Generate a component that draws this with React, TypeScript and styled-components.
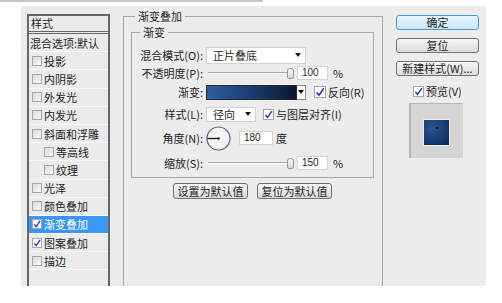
import React from 'react';
import styled, { createGlobalStyle } from 'styled-components';

const Global = createGlobalStyle`
  html, body { margin: 0; padding: 0; background: #fff; }
  body {
    font-family: "Noto Sans CJK SC", "Noto Sans", sans-serif;
    font-size: 11px;
    color: #1e1e1e;
  }
  * { box-sizing: border-box; }
`;

const TopStrip = styled.div`
  width: 263px;
  height: 2px;
  background: #c6c6c6;
`;

const Dialog = styled.div`
  margin: 4px 0 0 21px;
  width: 465px;
  height: 280px;
  background: #ececec;
  display: flex;
  align-items: flex-start;
  overflow: hidden;
`;

/* ---------- left style list ---------- */
const StyleList = styled.div`
  margin: 8px 0 0 6px;
  width: 83px;
  height: 272px;
  border: 2px solid #666;
  border-bottom: none;
  background: #ebebeb;
  display: flex;
  flex-direction: column;
  flex: none;
`;

const ListHeader = styled.div`
  height: 18px;
  border-bottom: 3px double #666;
  padding-left: 2px;
  line-height: 15px;
`;

const ListRow = styled.div<{ $sub?: boolean; $selected?: boolean; $plain?: boolean }>`
  height: 18.2px;
  flex: none;
  display: flex;
  align-items: center;
  gap: 2px;
  padding-left: ${p => (p.$plain ? 1 : p.$sub ? 15 : 3)}px;
  border-bottom: 1px solid #f9f9f9;
  background: ${p => (p.$selected ? '#3896f4' : 'transparent')};
  color: ${p => (p.$selected ? '#fff' : '#1e1e1e')};
  white-space: nowrap;
`;

const Box = styled.span<{ $size: number; $light?: boolean }>`
  display: inline-flex;
  align-items: center;
  justify-content: center;
  flex: none;
  width: ${p => p.$size}px;
  height: ${p => p.$size}px;
  border: 1px solid #a6a6a6;
  background: ${p => (p.$light ? '#fff' : 'linear-gradient(135deg, #dadada, #f8f8f8)')};
`;

function Check({ checked, size = 10, light }: { checked?: boolean; size?: number; light?: boolean }) {
  return (
    <Box $size={size} $light={light || checked}>
      {checked && (
        <svg width={size - 2} height={size - 2} viewBox="0 0 10 10">
          <path d="M1.5 5.5 L4 8.2 L8.8 1.2" stroke="#2b3e9c" strokeWidth="1.7" fill="none" />
        </svg>
      )}
    </Box>
  );
}

/* ---------- main group ---------- */
const Group = styled.fieldset`
  margin: 3px 0 0 13px;
  padding: 0 8px 0 7px;
  width: 260px;
  height: 290px;
  border: 1px solid #a9a9a9;
  border-bottom: none;
  flex: none;
  min-width: 0;
`;

const Legend = styled.legend<{ $inset: number }>`
  margin-left: ${p => p.$inset}px;
  padding: 0 3px;
  line-height: 14px;
  font-size: 11px;
`;

const InnerGroup = styled.fieldset`
  margin: 2px 0 0 0;
  padding: 7px 0 1px 0;
  width: 243px;
  border: 1px solid #a9a9a9;
  min-width: 0;
  display: flex;
  flex-direction: column;
`;

const FormRow = styled.div<{ $h: number }>`
  height: ${p => p.$h}px;
  display: flex;
  align-items: center;
`;

const Label = styled.span`
  width: 71px;
  margin-right: 3px;
  text-align: right;
  flex: none;
  white-space: nowrap;
`;

const Select = styled.div<{ $w: number; $h: number }>`
  width: ${p => p.$w}px;
  height: ${p => p.$h}px;
  background: #fff;
  border: 1px solid #d2d2d2;
  display: flex;
  align-items: center;
  justify-content: space-between;
  padding: 0 4px 0 6px;
  flex: none;
`;

const Arrow = styled.span`
  width: 0;
  height: 0;
  border-left: 3.5px solid transparent;
  border-right: 3.5px solid transparent;
  border-top: 4px solid #111;
`;

const SliderTrack = styled.div`
  width: 88px;
  height: 12px;
  margin: 0 3px 0 0;
  display: flex;
  align-items: center;
  justify-content: flex-end;
  flex: none;
  background: linear-gradient(#0000 5px, #a4a4a4 5px, #a4a4a4 6px, #fff 6px, #fff 7px, #0000 7px);
  background-size: 82px 12px;
  background-repeat: no-repeat;
  background-position: 2px 0;
`;

const Thumb = styled.span`
  width: 7px;
  height: 11px;
  border: 1px solid #9a9a9a;
  border-radius: 3px 3px 2px 2px;
  background: linear-gradient(#fafafa, #d6d6d6);
`;

const Input = styled.div<{ $w: number }>`
  width: ${p => p.$w}px;
  height: 14px;
  background: #fff;
  border: 1px solid #d4d4d4;
  padding-left: 4px;
  line-height: 12px;
  font-family: "Liberation Sans", "Noto Sans", sans-serif;
  font-size: 10px;
  flex: none;
`;

const Unit = styled.span<{ $gap: number }>`
  margin-left: ${p => p.$gap}px;
`;

const Swatch = styled.div`
  width: 91px;
  height: 15px;
  border: 1px solid #2a2a2a;
  background: linear-gradient(90deg, #2e5fa4 0%, #1d3f73 45%, #0a1830 100%);
  flex: none;
`;

const SwatchDrop = styled.div`
  width: 9px;
  height: 15px;
  border: 1px solid #8a8a8a;
  border-left: none;
  background: #fff;
  display: flex;
  align-items: center;
  justify-content: center;
  margin-right: 8px;
  flex: none;
`;

const CheckLabel = styled.span`
  display: inline-flex;
  align-items: center;
  gap: 2px;
  white-space: nowrap;
`;

const ButtonRow = styled.div`
  display: flex;
  gap: 9px;
  margin: 5px 0 0 42px;
`;

const Button = styled.div<{ $w: number; $primary?: boolean }>`
  width: ${p => p.$w}px;
  height: 16px;
  border: 1px solid ${p => (p.$primary ? '#3c9fd8' : '#707070')};
  border-radius: 3px;
  background: ${p =>
    p.$primary ? 'linear-gradient(#eaf6fd, #c9e6f6)' : 'linear-gradient(#f7f7f7, #dcdcdc)'};
  display: flex;
  align-items: center;
  justify-content: center;
  line-height: 1;
  white-space: nowrap;
  flex: none;
`;

/* ---------- right column ---------- */
const SideColumn = styled.div`
  margin: 9px 0 0 13px;
  width: 83px;
  display: flex;
  flex-direction: column;
  gap: 8px;
  flex: none;
`;

const SideButton = styled(Button)`
  height: 15px;
`;

const PreviewCheck = styled(CheckLabel)`
  margin: 0 0 0 17px;
  height: 14px;
`;

const PreviewBox = styled.div`
  margin: -3px 0 0 13px;
  width: 54px;
  height: 55px;
  background: #d5d5d5;
  border-left: 2px solid #b4b4b4;
  border-top: 1px solid #b8b8b8;
  display: flex;
  padding: 15px 0 0 12px;
`;

const PreviewSquare = styled.div`
  width: 27px;
  height: 27px;
  border: 1px solid #ececec;
  background: radial-gradient(circle at 35% 30%, #2a5594, #163a6e 60%, #10295a);
  display: flex;
  justify-content: center;
  padding-top: 7px;
`;

const Dot = styled.span`
  width: 2px;
  height: 2px;
  background: #081020;
`;

const AngleDial = () => (
  <svg width="25" height="25" viewBox="0 0 25 25" style={{ flex: 'none', marginRight: 8 }}>
    <circle cx="12.5" cy="12.5" r="11.5" fill="#f3f3f3" stroke="#52618a" strokeWidth="1.2" />
    <line x1="1.5" y1="12.5" x2="12.5" y2="12.5" stroke="#1a1a1a" strokeWidth="1.3" />
    <circle cx="12.5" cy="12.5" r="1.2" fill="#111" />
  </svg>
);

const items: { label: string; checked?: boolean; sub?: boolean; selected?: boolean }[] = [
  { label: '投影' },
  { label: '内阴影' },
  { label: '外发光' },
  { label: '内发光' },
  { label: '斜面和浮雕' },
  { label: '等高线', sub: true },
  { label: '纹理', sub: true },
  { label: '光泽' },
  { label: '颜色叠加' },
  { label: '渐变叠加', checked: true, selected: true },
  { label: '图案叠加', checked: true },
  { label: '描边' },
];

export default function App() {
  return (
    <>
      <Global />
      <TopStrip />
      <Dialog>
        <StyleList>
          <ListHeader>样式</ListHeader>
          <ListRow $plain>混合选项:默认</ListRow>
          {items.map(it => (
            <ListRow key={it.label} $sub={it.sub} $selected={it.selected}>
              <Check checked={it.checked} />
              {it.label}
            </ListRow>
          ))}
          <ListRow />
        </StyleList>

        <Group>
          <Legend $inset={4}>渐变叠加</Legend>
          <InnerGroup>
            <Legend $inset={8}>渐变</Legend>
            <FormRow $h={18}>
              <Label>混合模式(O):</Label>
              <Select $w={100} $h={17}>
                正片叠底
                <Arrow />
              </Select>
            </FormRow>
            <FormRow $h={18}>
              <Label>不透明度(P):</Label>
              <SliderTrack>
                <Thumb />
              </SliderTrack>
              <Input $w={31}>100</Input>
              <Unit $gap={5}>%</Unit>
            </FormRow>
            <FormRow $h={20}>
              <Label>渐变:</Label>
              <Swatch />
              <SwatchDrop>
                <Arrow />
              </SwatchDrop>
              <CheckLabel>
                <Check checked size={12} />
                反向(R)
              </CheckLabel>
            </FormRow>
            <FormRow $h={24}>
              <Label>样式(L):</Label>
              <Select $w={50} $h={15} style={{ marginRight: 7 }}>
                径向
                <Arrow />
              </Select>
              <CheckLabel>
                <Check checked size={11} />
                与图层对齐(I)
              </CheckLabel>
            </FormRow>
            <FormRow $h={24}>
              <Label>角度(N):</Label>
              <AngleDial />
              <Input $w={34}>180</Input>
              <Unit $gap={3}>度</Unit>
            </FormRow>
            <FormRow $h={26}>
              <Label>缩放(S):</Label>
              <SliderTrack>
                <Thumb />
              </SliderTrack>
              <Input $w={31}>150</Input>
              <Unit $gap={5}>%</Unit>
            </FormRow>
          </InnerGroup>
          <ButtonRow>
            <Button $w={75}>设置为默认值</Button>
            <Button $w={75}>复位为默认值</Button>
          </ButtonRow>
        </Group>

        <SideColumn>
          <SideButton $w={83} $primary>确定</SideButton>
          <SideButton $w={83}>复位</SideButton>
          <SideButton $w={83}>新建样式(W)...</SideButton>
          <PreviewCheck>
            <Check checked size={11} />
            预览(V)
          </PreviewCheck>
          <PreviewBox>
            <PreviewSquare>
              <Dot />
            </PreviewSquare>
          </PreviewBox>
        </SideColumn>
      </Dialog>
    </>
  );
}
